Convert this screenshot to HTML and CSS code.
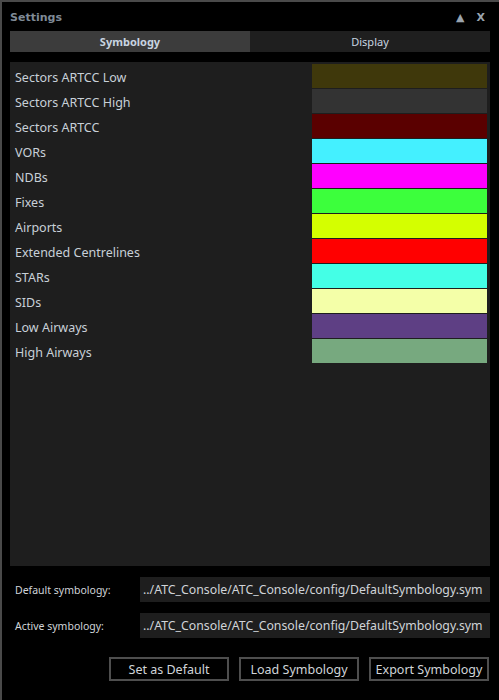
FILE: index.html
```html
<!DOCTYPE html>
<html>
<head>
<meta charset="utf-8">
<link rel="stylesheet" href="styles.css">
</head>
<body>
<div class="window">
  <div class="titlebar">
    <span class="title">Settings</span>
    <span class="controls"><span class="ctl">▲</span><span class="ctl">X</span></span>
  </div>
  <div class="tabs">
    <div class="tab active">Symbology</div>
    <div class="tab">Display</div>
  </div>
  <div class="panel">
    <div class="row"><span class="label">Sectors ARTCC Low</span><span class="swatch" style="background:#3f380b"></span></div>
    <div class="row"><span class="label">Sectors ARTCC High</span><span class="swatch" style="background:#333333"></span></div>
    <div class="row"><span class="label">Sectors ARTCC</span><span class="swatch" style="background:#5a0000"></span></div>
    <div class="row"><span class="label">VORs</span><span class="swatch" style="background:#44f0ff"></span></div>
    <div class="row"><span class="label">NDBs</span><span class="swatch" style="background:#ff00ff"></span></div>
    <div class="row"><span class="label">Fixes</span><span class="swatch" style="background:#3cff3c"></span></div>
    <div class="row"><span class="label">Airports</span><span class="swatch" style="background:#d4ff00"></span></div>
    <div class="row"><span class="label">Extended Centrelines</span><span class="swatch" style="background:#ff0000"></span></div>
    <div class="row"><span class="label">STARs</span><span class="swatch" style="background:#44ffe6"></span></div>
    <div class="row"><span class="label">SIDs</span><span class="swatch" style="background:#f4ffa8"></span></div>
    <div class="row"><span class="label">Low Airways</span><span class="swatch" style="background:#5e3f84"></span></div>
    <div class="row"><span class="label">High Airways</span><span class="swatch" style="background:#77a97f"></span></div>
  </div>
  <div class="fields">
    <div class="field-row"><span class="flabel">Default symbology:</span><span class="fvalue">../ATC_Console/ATC_Console/config/DefaultSymbology.sym</span></div>
    <div class="field-row"><span class="flabel">Active symbology:</span><span class="fvalue">../ATC_Console/ATC_Console/config/DefaultSymbology.sym</span></div>
  </div>
  <div class="buttons">
    <button class="btn">Set as Default</button>
    <button class="btn">Load Symbology</button>
    <button class="btn">Export Symbology</button>
  </div>
</div>
</body>
</html>
```
FILE: styles.css
```css
html, body {
  margin: 0;
  padding: 0;
  background: #000;
}
body {
  font-family: "Noto Sans", "Open Sans", sans-serif;
  color: #c8d0d8;
}
.window {
  width: 499px;
  height: 700px;
  box-sizing: border-box;
  border-top: 2px solid #4a4a4a;
  border-left: 2px solid #4a4a4a;
  padding: 0 9px 0 8px;
  display: flex;
  flex-direction: column;
}
.titlebar {
  height: 29px;
  display: flex;
  align-items: center;
  justify-content: space-between;
}
.title {
  font-family: "DejaVu Sans", sans-serif;
  font-weight: bold;
  font-size: 11px;
  color: #7f8a96;
  padding-top: 2px;
}
.controls {
  display: flex;
  gap: 12px;
  padding-right: 5px;
  padding-top: 2px;
  font-family: "DejaVu Sans", sans-serif;
  font-weight: bold;
  font-size: 11px;
  color: #9aa4ae;
}
.tabs {
  display: flex;
  height: 21px;
}
.tab {
  flex: 1;
  display: flex;
  align-items: center;
  justify-content: center;
  background: #1f1f1f;
  font-size: 11px;
  color: #c8d4e0;
}
.tab.active {
  background: #3c3c3c;
  font-weight: bold;
  flex: 0 0 240px;
}
.panel {
  margin-top: 10px;
  height: 504px;
  background: #1e1e1e;
  box-sizing: border-box;
  padding: 2px 3px 0 5px;
  display: flex;
  flex-direction: column;
  gap: 1px;
}
.row {
  display: flex;
  align-items: center;
  height: 24px;
}
.label {
  flex: 1;
  font-size: 12.5px;
  color: #c8d0d8;
  padding-top: 2px;
}
.swatch {
  width: 175px;
  height: 24px;
}
.fields {
  margin-top: 11px;
  display: flex;
  flex-direction: column;
  gap: 11px;
}
.field-row {
  display: flex;
  align-items: center;
  height: 25px;
}
.flabel {
  width: 125px;
  padding-left: 5px;
  font-size: 10.5px;
  color: #d0d4d8;
}
.fvalue {
  flex: 1;
  height: 25px;
  display: flex;
  align-items: center;
  padding-left: 3px;
  background: #1e1e1e;
  font-size: 12.3px;
  color: #d0d4d8;
  white-space: nowrap;
  overflow: hidden;
}
.buttons {
  margin-top: 19px;
  display: flex;
  justify-content: flex-end;
  gap: 10px;
  padding-right: 1px;
}
.btn {
  width: 120px;
  height: 24px;
  background: #000;
  border: 2px solid #4e4e4e;
  box-sizing: border-box;
  font-family: "Noto Sans", "Open Sans", sans-serif;
  font-size: 12.5px;
  color: #d0d4d8;
  padding: 0;
}
```
